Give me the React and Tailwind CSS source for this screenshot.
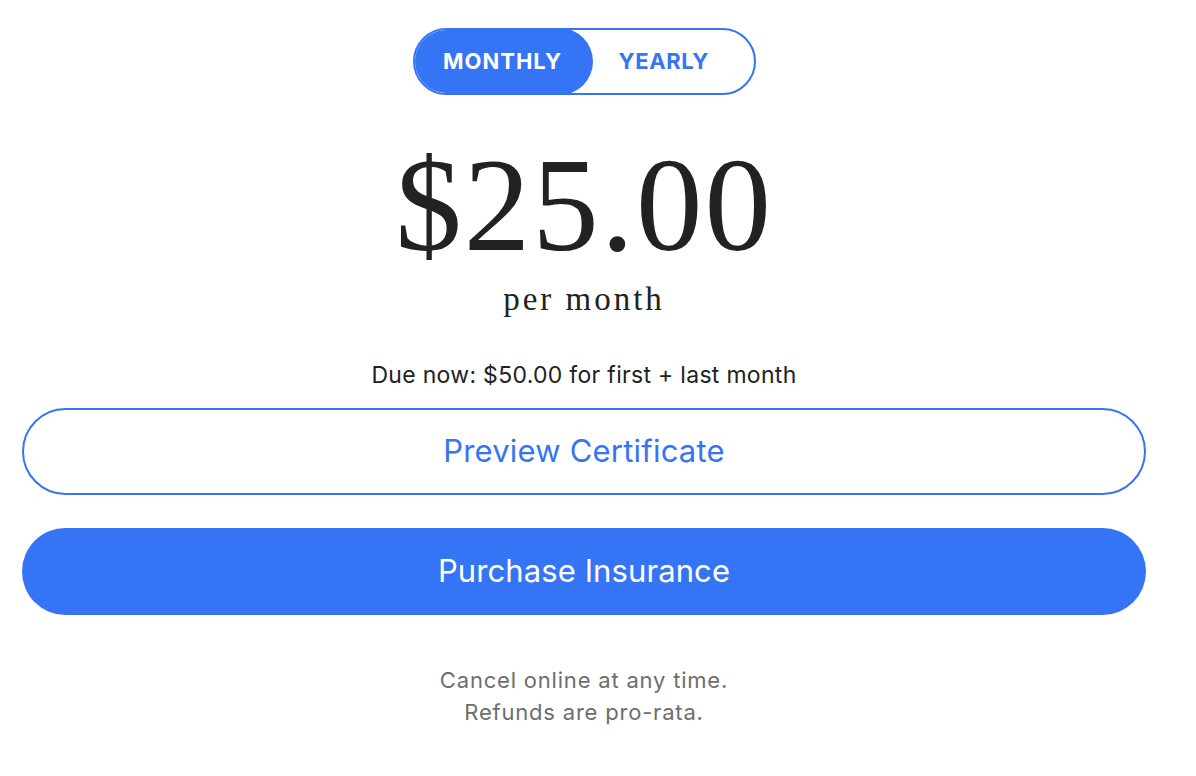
export default function App() {
  return (
    <div className="w-[1196px] h-[776px] bg-white overflow-hidden" style={{ fontFamily: "Inter, 'Liberation Sans', sans-serif" }}>
      <div className="ml-[22px] w-[1124px] flex flex-col items-center pt-[28px]">
        <div className="flex h-[67px] w-[343px] rounded-full border-2 border-[#3575F5] overflow-hidden">
          <button className="-m-[2px] h-[67px] w-[180px] shrink-0 rounded-full bg-[#3575F5] text-white text-[22px] font-bold tracking-[1px] flex items-center justify-center">
            MONTHLY
          </button>
          <button className="h-full flex-1 text-[#3575F5] text-[22px] font-bold tracking-[0.6px] flex items-center pl-[28px]">
            YEARLY
          </button>
        </div>
        <div className="mt-[44px] h-[133px] text-[133px] leading-[133px] text-[#222222] tracking-[2px]" style={{ fontFamily: "'Liberation Serif', serif" }}>
          $25.00
        </div>
        <div className="mt-[11px] text-[33px] leading-[32px] text-[#222222] tracking-[3px]" style={{ fontFamily: "'Liberation Serif', serif" }}>
          per month
        </div>
        <div className="mt-[48px] text-[23px] leading-[24px] text-[#222222] tracking-[0.3px]">
          Due now: $50.00 for first + last month
        </div>
        <button className="mt-[21px] w-full h-[87px] rounded-full border-2 border-[#3575F5] bg-white text-[#3575F5] text-[31px] tracking-[0.2px] flex items-center justify-center">
          Preview Certificate
        </button>
        <button className="mt-[33px] w-full h-[87px] rounded-full bg-[#3575F5] text-white text-[31px] tracking-[0.1px] flex items-center justify-center">
          Purchase Insurance
        </button>
        <div className="mt-[49px] text-[22px] leading-[32px] text-[#6e6e6e] text-center tracking-[0.8px]">
          <div>Cancel online at any time.</div>
          <div>Refunds are pro-rata.</div>
        </div>
      </div>
    </div>
  );
}
